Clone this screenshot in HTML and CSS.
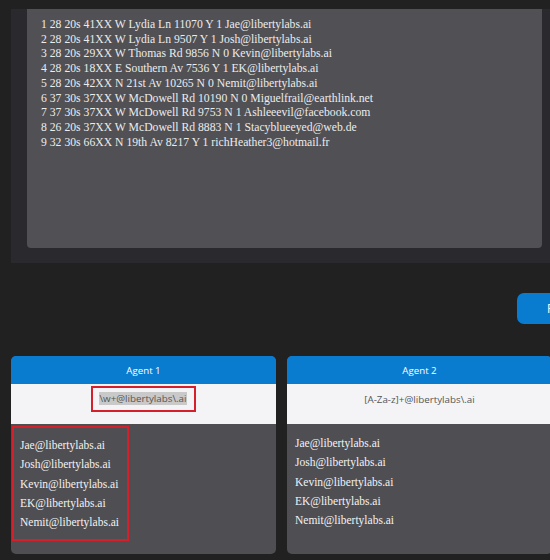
FILE: index.html
```html
<!DOCTYPE html>
<html>
<head>
<meta charset="utf-8">
<link rel="stylesheet" href="styles.css">
</head>
<body>
<div class="page">
  <section class="panel">
    <div class="data">
      <div>1 28 20s 41XX W Lydia Ln 11070 Y 1 Jae@libertylabs.ai</div>
      <div>2 28 20s 41XX W Lydia Ln 9507 Y 1 Josh@libertylabs.ai</div>
      <div>3 28 20s 29XX W Thomas Rd 9856 N 0 Kevin@libertylabs.ai</div>
      <div>4 28 20s 18XX E Southern Av 7536 Y 1 EK@libertylabs.ai</div>
      <div>5 28 20s 42XX N 21st Av 10265 N 0 Nemit@libertylabs.ai</div>
      <div>6 37 30s 37XX W McDowell Rd 10190 N 0 Miguelfrail@earthlink.net</div>
      <div>7 37 30s 37XX W McDowell Rd 9753 N 1 Ashleeevil@facebook.com</div>
      <div>8 26 20s 37XX W McDowell Rd 8883 N 1 Stacyblueeyed@web.de</div>
      <div>9 32 30s 66XX N 19th Av 8217 Y 1 richHeather3@hotmail.fr</div>
    </div>
  </section>
  <div class="actions">
    <button class="run">Run</button>
  </div>
  <div class="agents">
    <div class="card">
      <div class="card-head">Agent 1</div>
      <div class="card-input"><span class="pattern marked"><span class="sel">\w+@libertylabs\.ai</span></span></div>
      <div class="card-body">
        <ul class="matches boxed">
          <li>Jae@libertylabs.ai</li>
          <li>Josh@libertylabs.ai</li>
          <li>Kevin@libertylabs.ai</li>
          <li>EK@libertylabs.ai</li>
          <li>Nemit@libertylabs.ai</li>
        </ul>
      </div>
    </div>
    <div class="card">
      <div class="card-head">Agent 2</div>
      <div class="card-input"><span class="pattern">[A-Za-z]+@libertylabs\.ai</span></div>
      <div class="card-body">
        <ul class="matches">
          <li>Jae@libertylabs.ai</li>
          <li>Josh@libertylabs.ai</li>
          <li>Kevin@libertylabs.ai</li>
          <li>EK@libertylabs.ai</li>
          <li>Nemit@libertylabs.ai</li>
        </ul>
      </div>
    </div>
  </div>
</div>
</body>
</html>
```

FILE: styles.css
```css
html, body {
  margin: 0;
  padding: 0;
  overflow: hidden;
  background: #212121;
  width: 550px;
  height: 560px;
}
.page {
  width: 580px;
  padding-top: 9px;
}
.panel {
  margin-left: 11px;
  width: 539px;
  box-sizing: border-box;
  background: #2a2a2e;
  padding: 0 8px 15px 16px;
}
.data {
  height: 239px;
  box-sizing: border-box;
  background: #505055;
  border-radius: 0 0 4px 4px;
  padding: 9px 14px;
  color: #ececec;
  font-family: "Liberation Serif", serif;
  font-size: 11.7px;
  line-height: 14.7px;
}
.actions {
  display: flex;
  justify-content: flex-start;
  padding-left: 517px;
  margin-top: 30px;
}
.run {
  width: 80px;
  height: 31px;
  border: none;
  border-radius: 7px;
  background: #0a7cd0;
  color: #fff;
  font-family: "Open Sans", sans-serif;
  font-size: 12px;
  text-align: left;
  padding-left: 30px;
}
.agents {
  display: grid;
  grid-template-columns: 265px 265px;
  column-gap: 11px;
  margin-left: 11px;
  margin-top: 32px;
}
.card {
  height: 198px;
  display: flex;
  flex-direction: column;
  border-radius: 5px;
  overflow: hidden;
  background: #4f4e53;
}
.card-head {
  height: 28px;
  background: #0a7cd0;
  color: #fff;
  font-family: "Open Sans", sans-serif;
  font-size: 9.7px;
  display: flex;
  align-items: center;
  justify-content: center;
}
.card-input {
  height: 40px;
  background: #f4f4f6;
  display: flex;
  justify-content: center;
  align-items: flex-start;
  padding-top: 2px;
  box-sizing: border-box;
}
.pattern {
  font-family: "Open Sans", sans-serif;
  font-size: 9.8px;
  color: #555;
  line-height: 14px;
  padding: 7px 0;
}
.pattern.marked {
  border: 2px solid #d51f2a;
  padding: 4px 7px 4px 6px;
  display: inline-block;
}
.sel {
  background: #c9c9c9;
  color: #555;
}
.card-body {
  flex: 1;
}
.matches {
  list-style: none;
  margin: 0;
  padding: 10px 0 0 8px;
  font-family: "Liberation Serif", serif;
  font-size: 11.5px;
  color: #f2f2f2;
}
.matches li {
  height: 19.3px;
  line-height: 19.3px;
}
.matches.boxed {
  margin: 2px 0 0 1px;
  width: 117px;
  height: 115px;
  box-sizing: border-box;
  border: 2px solid #d51f2a;
  padding: 8px 0 0 6px;
}
```
